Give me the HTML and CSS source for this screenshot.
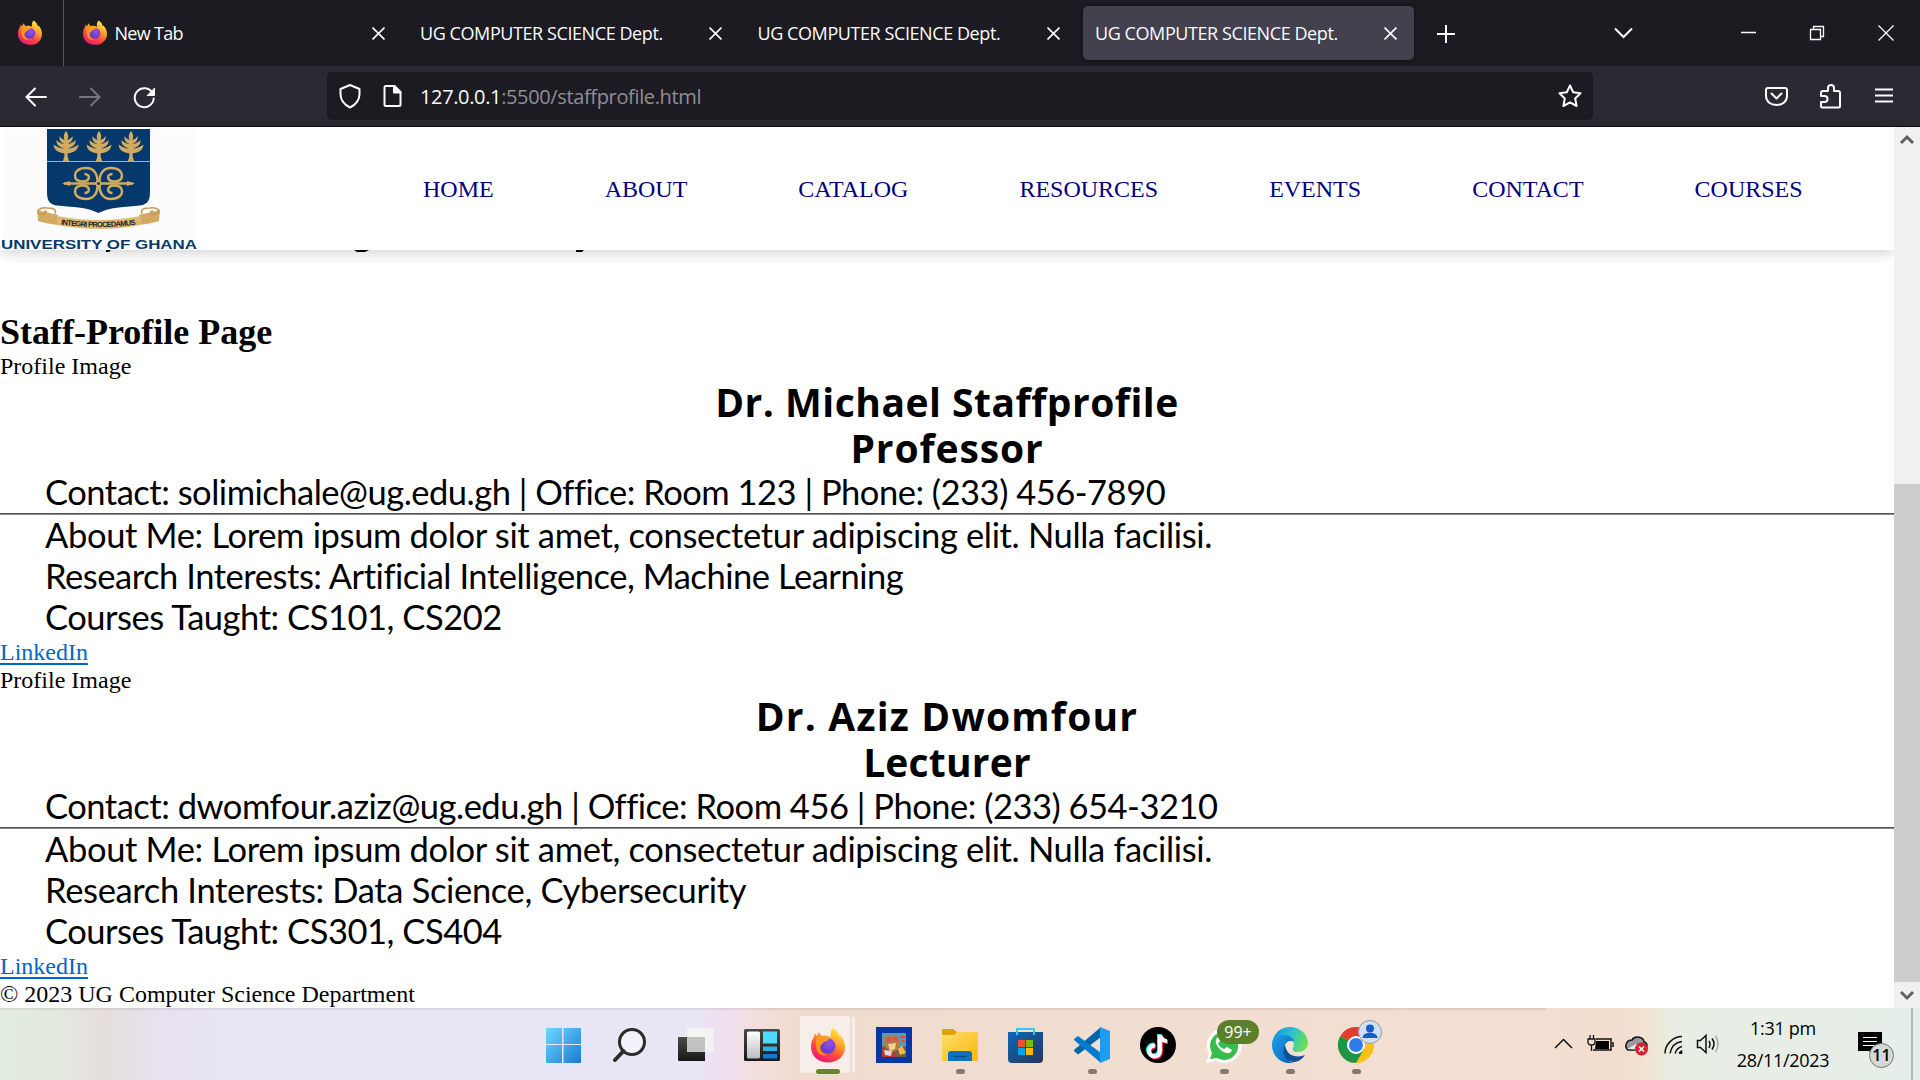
FILE: index.html
```html
<!DOCTYPE html>
<html lang="en">
<head>
<meta charset="utf-8">
<title>UG COMPUTER SCIENCE Dept.</title>
<link rel="stylesheet" href="styles.css">
</head>
<body>
<svg class="defs" aria-hidden="true">
  <defs>
    <linearGradient id="fxBody" x1=".8" y1="0" x2=".25" y2="1"><stop offset="0" stop-color="#fff04a"/><stop offset=".35" stop-color="#ffa726"/><stop offset=".65" stop-color="#ff4a3d"/><stop offset="1" stop-color="#e8127c"/></linearGradient>
    <radialGradient id="fxGlobe" cx=".6" cy=".3" r=".8"><stop offset="0" stop-color="#a04bf0"/><stop offset="1" stop-color="#4a3fc0"/></radialGradient>
    <linearGradient id="win" x1="0" y1="0" x2="1" y2="1"><stop offset="0" stop-color="#6fd8ff"/><stop offset="1" stop-color="#1a7bd4"/></linearGradient>
    <linearGradient id="dark" x1="0" y1="0" x2="0" y2="1"><stop offset="0" stop-color="#4a4a48"/><stop offset="1" stop-color="#181818"/></linearGradient>
    <linearGradient id="pane" x1="0" y1="0" x2="0" y2="1"><stop offset="0" stop-color="#fff"/><stop offset="1" stop-color="#b9bdc2"/></linearGradient>
    <linearGradient id="fold" x1="0" y1="0" x2="1" y2="1"><stop offset="0" stop-color="#ffdc6b"/><stop offset="1" stop-color="#fbb80f"/></linearGradient>
    <linearGradient id="store" x1="0" y1="0" x2="1" y2="1"><stop offset="0" stop-color="#0d68b8"/><stop offset="1" stop-color="#26355d"/></linearGradient>
    <linearGradient id="edgeTop" x1="0" y1=".3" x2="1" y2=".6"><stop offset="0" stop-color="#1593d8"/><stop offset=".5" stop-color="#2fc2cf"/><stop offset="1" stop-color="#6ee24a"/></linearGradient>
    <linearGradient id="edgeLow" x1="0" y1="0" x2="1" y2="1"><stop offset="0" stop-color="#1da1e6"/><stop offset="1" stop-color="#0863be"/></linearGradient>
    <symbol id="firefox" viewBox="0 0 34 36">
      <path fill="url(#fxBody)" d="M22 1c3 2 5 4 6 8l1-1c3 3 5 7 5 12 0 9-7 15.500-17 15.500S0 29 0 19.500C0 15 1.500 12 3 10l.5-3.500L6 9l1.500-4L11 9c3-1 7 0 9 1-1-4 0-7 2-9z"/>
      <circle cx="17" cy="19" r="7.500" fill="url(#fxGlobe)"/>
      <path fill="#ff9a1f" d="M5 11c3-2 6-2 8 0l5 1c-1 2-3 2-5 3-2 1-2 3-4 4-1 5 3 9 8 9-7 2-12-3-12-9z"/>
    </symbol>
    <symbol id="x" viewBox="0 0 12 12"><path d="M.5.5l11 11M11.500.5l-11 11" fill="none" stroke="currentColor" stroke-width="1.500"/></symbol>
    <symbol id="tree" viewBox="0 0 26 31"><path fill="#d3aa62" d="M13 0c2 3 3 5 1.500 9 2-1 4-2 5-4 .5 4-1 6-5 8 4-.5 6-2 8-4 .5 5-3 7-8 8.500 5 0 8-2 11-4-.5 6-5 8-11 9 0 3 .5 5 2 8.500h-7c1.500-3.500 2-5.500 2-8.500-6-1-10.500-3-11-9 3 2 6 4 11 4-5-1.500-8.500-3.500-8-8.500 2 2 4 3.500 8 4-4-2-5.500-4-5-8 1 2 3 3 5 4C10 5 11 3 13 0z"/></symbol>
  </defs>
</svg>

<header class="tabs">
  <div class="pinned"><svg class="fx"><use href="#firefox"/></svg></div>
  <div class="tab"><svg class="fx"><use href="#firefox"/></svg><span class="tab-title newtab">New Tab</span><svg class="tab-x"><use href="#x"/></svg></div>
  <div class="tab"><span class="tab-title">UG COMPUTER SCIENCE Dept.</span><svg class="tab-x"><use href="#x"/></svg></div>
  <div class="tab"><span class="tab-title">UG COMPUTER SCIENCE Dept.</span><svg class="tab-x"><use href="#x"/></svg></div>
  <div class="tab active"><span class="tab-title">UG COMPUTER SCIENCE Dept.</span><svg class="tab-x"><use href="#x"/></svg></div>
  <svg class="window-icons" width="506" height="66" fill="none" stroke="#fbfbfe">
    <path d="M32 25v18M23 34h18" stroke-width="2"/>
    <path d="M201 28.500l8.500 8.500 8.500-8.500" stroke-width="2"/>
    <path d="M327 32.500h15M396.500 29.500h10v10h-10zM399.500 29v-2.500h10v10H407" stroke-width="1.300"/>
    <path d="M464.500 25.500l15 15M479.500 25.500l-15 15" stroke-width="1.300"/>
  </svg>
</header>

<div class="toolbar">
  <svg class="nav-icons" width="327" height="60" fill="none" stroke="#fbfbfe" stroke-width="2" stroke-linecap="round">
    <path d="M46 31H27M35 22.500L26.500 31l8.500 8.500"/>
    <path d="M80 31h19M91 22.500l8.500 8.500-8.500 8.500" stroke="#76757e"/>
    <path d="M152.500 27a9.500 9.500 0 1 0 1.200 5.500"/><path d="M154.500 22.500v7h-7z" fill="#fbfbfe" stroke-width="1"/>
  </svg>
  <div class="url">
    <svg class="url-icons" width="93" height="48" fill="none" stroke="#fbfbfe" stroke-width="2" stroke-linejoin="round">
      <path d="M23 13l9.500 4v5c0 6-3.500 10.500-9.500 13.500C17 32.500 13.500 28 13.500 22v-5z"/>
      <path d="M59 14h8.500l6 6v12.500a1.500 1.500 0 0 1-1.500 1.500H59a1.500 1.500 0 0 1-1.500-1.500v-17A1.500 1.500 0 0 1 59 14z"/><path d="M67 14v6.500h6.500z" fill="#fbfbfe"/>
    </svg>
    <span class="url-text"><b>127.0.0.1</b>:5500/staffprofile.html</span>
    <svg class="star" width="26" height="26" viewBox="0 0 26 26" fill="none" stroke="#fbfbfe" stroke-width="2" stroke-linejoin="round"><path d="M13 2.500l3.200 6.800 7.300 1-5.300 5.200 1.400 7.500-6.600-3.600L6.400 23l1.400-7.500-5.300-5.200 7.300-1z"/></svg>
  </div>
  <svg class="ext-icons" width="327" height="60" fill="none" stroke="#fbfbfe" stroke-width="2" stroke-linejoin="round">
    <path d="M175 22h17a2 2 0 0 1 2 2v6c0 6-5 9-10.500 9S173 36 173 30v-6a2 2 0 0 1 2-2z"/><path d="M178.500 27.500l5 5 5-5" stroke-linecap="round"/>
    <path d="M230 25h5v-3a3 3 0 0 1 6 0v3h4a2 2 0 0 1 2 2v13a1.500 1.500 0 0 1-1.500 1.500h-16A1.500 1.500 0 0 1 228 40v-4h3.500a3 3 0 0 0 0-6H228v-3a2 2 0 0 1 2-2z"/>
    <path d="M282 23.500h18M282 29.500h18M282 35.500h18"/>
  </svg>
</div>

<div class="viewport">
  <main class="page">
    <nav class="site-nav">
      <svg class="logo" width="200" height="123" viewBox="0 0 200 123">
        <path d="M2 2h195v120H2z" fill="#fcfcfc"/>
        <path d="M47 2h103v63c0 16-9 13-27 15-12 1-18 3-24.500 6-6.500-3-12.500-5-24.500-6-18-2-27 1-27-15z" fill="#06396b"/>
        <path d="M47 34.500h103" stroke="#d3aa62"/>
        <use href="#tree" x="53" y="4" width="26" height="31"/><use href="#tree" x="86" y="4" width="26" height="31"/><use href="#tree" x="118" y="4" width="26" height="31"/>
        <g fill="none" stroke="#d3aa62" stroke-width="2.500">
          <path d="M64 56.500h69"/>
          <path id="swirl" d="M97.500 56C98 46 93 41 86 41c-8 0-11 4-11 7.500 0 4.500 4 6 8 6 7 0 8-7.500 1.500-7.500"/>
          <use href="#swirl" transform="matrix(-1 0 0 1 197 0)"/><use href="#swirl" transform="matrix(1 0 0 -1 0 113)"/><use href="#swirl" transform="matrix(-1 0 0 -1 197 113)"/>
        </g>
        <path d="M62 56.500l8-2.500v5zM135 56.500l-8-2.500v5zM98.500 52l4 4.500-4 4.500-4-4.500z" fill="#d3aa62"/><circle cx="98.500" cy="56.500" r="1.500" fill="#06396b"/>
        <path d="M37 83l21 5v10c-7-1-14-2-20-4zM160 83l-21 5v10c7-1 14-2 20-4z" fill="#d3aa62"/>
        <path d="M57 89q41.500 8 84 0v9q-42 8-84 0z" fill="#dfb973"/>
        <path d="M55 87c2-5-2-6-8-6-8-1-12 4-7 6 5 1 9-3 4-3M142 87c-2-5 2-6 8-6 8-1 12 4 7 6-5 1-9-3-4-3" fill="none" stroke="#c59c55" stroke-width="1.500"/>
        <path id="motto" d="M61 97.500q37.500 5 76 0" fill="none"/>
        <text class="motto"><textPath href="#motto" textLength="75">INTEGRI PROCEDAMUS</textPath></text>
        <text class="uni" x="1" y="122" textLength="196" lengthAdjust="spacingAndGlyphs">UNIVERSITY OF GHANA</text>
      </svg>
      <ul class="links"><li>HOME</li><li>ABOUT</li><li>CATALOG</li><li>RESOURCES</li><li>EVENTS</li><li>CONTACT</li><li>COURSES</li></ul>
    </nav>
    <svg class="peek" width="700" height="3"><path d="M106 0h5l-2 2h-3zM354 0h15l-4 2h-8zM576 0h8l-2 2h-6z" fill="#000"/></svg>
    <h1>Staff-Profile Page</h1>
    <section class="card">
      <p class="plain">Profile Image</p>
      <h2>Dr. Michael Staffprofile</h2>
      <h2 class="wide">Professor</h2>
      <p class="info contact">Contact: solimichale@ug.edu.gh | Office: Room 123 | Phone: (233) 456-7890</p>
      <hr>
      <p class="info about">About Me: Lorem ipsum dolor sit amet, consectetur adipiscing elit. Nulla facilisi.</p>
      <p class="info">Research Interests: Artificial Intelligence, Machine Learning</p>
      <p class="info">Courses Taught: CS101, CS202</p>
      <p class="plain"><a href="#">LinkedIn</a></p>
    </section>
    <section class="card">
      <p class="plain">Profile Image</p>
      <h2 class="wider">Dr. Aziz Dwomfour</h2>
      <h2 class="snug">Lecturer</h2>
      <p class="info contact">Contact: dwomfour.aziz@ug.edu.gh | Office: Room 456 | Phone: (233) 654-3210</p>
      <hr>
      <p class="info about">About Me: Lorem ipsum dolor sit amet, consectetur adipiscing elit. Nulla facilisi.</p>
      <p class="info about">Research Interests: Data Science, Cybersecurity</p>
      <p class="info">Courses Taught: CS301, CS404</p>
      <p class="plain"><a href="#">LinkedIn</a></p>
    </section>
    <footer class="plain">© 2023 UG Computer Science Department</footer>
  </main>
  <aside class="scroll">
    <svg width="26" height="26"><path d="M7 16l6-6 6 6" fill="none" stroke="#606060" stroke-width="3"/></svg>
    <div class="thumb"></div>
    <svg width="26" height="26"><path d="M7 10l6 6 6-6" fill="none" stroke="#606060" stroke-width="3"/></svg>
  </aside>
</div>

<footer class="taskbar">
  <div class="apps">
    <div class="app"><svg width="36" height="36"><path fill="url(#win)" d="M1 1h15v16H0V2a1 1 0 0 1 1-1zM17.500 1H34a1 1 0 0 1 1 1v15H17.500zM0 18h16v18H1a1 1 0 0 1-1-1zM17.500 18H35v17a1 1 0 0 1-1 1H17.500z"/></svg></div>
    <div class="app"><svg width="36" height="36" fill="none" stroke="#2b2b2b" stroke-width="3"><circle cx="20" cy="15" r="12.500" fill="#f3f2f8"/><path d="M11.500 24L3 33" stroke-width="4" stroke-linecap="round"/></svg></div>
    <div class="app"><svg width="36" height="36"><path d="M0 10h27v24H1a1 1 0 0 1-1-1z" fill="url(#dark)"/><path d="M9 1h27v24H9z" fill="#f4f4f2" fill-opacity=".9"/><path d="M9 10h18v15H9z" fill="#c2c2c2"/></svg></div>
    <div class="app"><svg width="36" height="36"><rect y="2" width="36" height="32" rx="1.500" fill="url(#dark)"/><rect x="3" y="4.500" width="13" height="27" rx="1.500" fill="url(#pane)"/><path d="M19 4.500h14v12H19z" fill="#50d9ff"/><path d="M19 19.500h14v4.500H19z" fill="#2cb0ea"/><path d="M19 27h14v4.500H19z" fill="#0c7cd9"/></svg></div>
    <div class="app current"><svg class="fx-big"><use href="#firefox"/></svg><i></i></div>
    <div class="app"><svg width="36" height="36"><path d="M0 0h36v36H0z" fill="#0636a4"/><path d="M6 6h24v24H6z" fill="#5b98b4"/><path d="M6 20l8-4 8 5 8-2v11H6z" fill="#7e5b38"/><path d="M8 12l3-4 9 1 4 4-1 9-8 4-6-6z" fill="#b77a43"/><path d="M10 11l4-1 1 4-4 1zM18 10l4 1-1 3-4-1z" fill="#ef4550"/><path d="M12 17l8-1-1 6-5 2z" fill="#f0d48d"/><path d="M6 23l5-1 9 6v2H6z" fill="#c6352f"/><path d="M8 23l8 1-1 5-6-1z" fill="#ddd"/><path d="M22 22l4-3 4 7-6 2z" fill="#eebb48"/><path d="M24 9h5v2h-5zM26 13h3v2h-3z" fill="#ef4343"/></svg></div>
    <div class="app run"><svg width="36" height="36"><path d="M0 3a1 1 0 0 1 1-1h10l4 3h20v10H0z" fill="#dda10c"/><path d="M0 8h12l3-3h21v28a1 1 0 0 1-1 1H1a1 1 0 0 1-1-1z" fill="url(#fold)"/><path d="M6 34v-7a3 3 0 0 1 3-3h18a3 3 0 0 1 3 3v7z" fill="#0c72c4"/><path d="M11 29.500h14" stroke="#064c8b" stroke-width="1.500"/></svg><i></i></div>
    <div class="app"><svg width="36" height="36"><path d="M0 5h35v27a4 4 0 0 1-4 4H4a4 4 0 0 1-4-4z" fill="url(#store)"/><path d="M9 8V2h17v6" fill="none" stroke="#35c6f4" stroke-width="2"/><path d="M10 13h7v7h-7z" fill="#f25022"/><path d="M18 13h7v7h-7z" fill="#7fba00"/><path d="M10 21h7v7h-7z" fill="#00a4ef"/><path d="M18 21h7v7h-7z" fill="#ffb900"/></svg></div>
    <div class="app run"><svg width="36" height="36"><path d="M27 0v10L4 27.500 0 24v-1z" fill="#0065a9"/><path d="M0 12l4-3 23 17v10L0 13z" fill="#007acc"/><path d="M26 0l10 4v28l-10 4z" fill="#1f9cf0"/></svg><i></i></div>
    <div class="app"><svg width="36" height="36"><circle cx="18" cy="18" r="18"/><g fill="none" stroke-width="4"><path d="M19 7v16a5.500 5.500 0 1 1-5-5.500M19 8c1 4 3 6 7 6" stroke="#25f4ee"/><path d="M21 9v16a5.500 5.500 0 1 1-5-5.500M21 9c1 4 3 6 7 6" stroke="#fe2c55"/><path d="M20 8v16a5.500 5.500 0 1 1-5-5.500M20 8c1 4 3 6 7 6" stroke="#fff"/></g></svg></div>
    <div class="app run"><svg width="36" height="36"><path d="M0 36l3-9A17.500 17.500 0 1 1 10 34z" fill="#fff"/><path d="M4 32l2-6A14 14 0 1 1 11 31z" fill="#36bd4a"/><path d="M12 10c-5 4-1 10 4 14 4 3 9 3 10-1l-5-3-3 2c-3-1-5-3-6-6l2-2z" fill="#fff"/></svg><b class="count">99+</b><i></i></div>
    <div class="app run"><svg width="36" height="36"><path d="M0 17C1 7 8 0 18 0s18 7 18 16c0 6-5 9-11 9-5 0-6-2-4-5 2-6-5-10-12-9-5 1-8 3-9 6z" fill="url(#edgeTop)"/><path d="M0 18c0-7 6-10 11-10 7 0 11 4 11 6-7-1-11 4-10 10 1 7 6 11 10 12C9 38 0 29 0 18z" fill="url(#edgeLow)"/><path d="M13 17c-4 9 0 18 10 18 5-1 8-4 10-7-7 3-19 2-20-11z" fill="#114f98"/><path d="M18 14c5 0 4 4 3 7-1 2 0 4 4 4 4 .5 7-.5 9-1-3 4-19 4-20-5 0-3 2-5 4-5z" fill="#f4e2d8"/></svg><i></i></div>
    <div class="app run"><svg width="36" height="36"><circle cx="18" cy="18" r="18" fill="#fbc116"/><path d="M18 18L2.400 9a18 18 0 0 1 31.200 0z" fill="#e33b2e"/><path d="M18 18L2.400 9A18 18 0 0 0 18 36l8-14z" fill="#229445"/><circle cx="18" cy="18" r="9" fill="#fff"/><circle cx="18" cy="18" r="7" fill="#2f7cec"/></svg><svg class="user" width="24" height="24"><circle cx="12" cy="12" r="11.500" fill="#cfdff8" stroke="#999" stroke-width="1"/><circle cx="12" cy="8.500" r="4" fill="#1a5cc8"/><path d="M4.500 18c0-7 15-7 15 0z" fill="#1a5cc8"/></svg><i></i></div>
  </div>
  <svg class="tray" width="180" height="72" fill="none" stroke="#111" stroke-width="1.500">
    <path d="M10 40l8.500-8.500L27 40"/>
    <path d="M51 31h15v11H48M68 34v5"/><path d="M51 33h13v8H50z" fill="#000" stroke="none"/><path d="M43 31h7v3c0 4-7 4-7 0zM45 31v-4M48.500 31v-4M46.500 37v6" stroke-width="1.300"/>
    <path d="M83 42h16c4-2 4-7 0-8 0-5-9-7-12-2-6 0-8 7-4 10z" fill="#999"/><path d="M82 41l9-5 8 6z" fill="#e6e6e6" stroke="none"/><circle cx="96.500" cy="41" r="6.500" fill="#d9202e" stroke="none"/><path d="M94 38.500l5 5M99 38.500l-5 5" stroke="#fff"/>
    <path d="M120 45.500c0-9 8-17 17-17M125 45.500c1-6 5-11 12-12M130 45.500c1-3 3-6 7-7M134 45.500l3-3"/><circle cx="136" cy="44.500" r="1.500" fill="#000" stroke="none"/>
    <path d="M152.500 32.500h3l5.500-5v17l-5.500-5h-3zM164 33q2 3 0 7M167 30.500q4 5 0 11"/><path d="M170.500 28q5 8 0 16" stroke="#aaa"/>
  </svg>
  <div class="clock"><span>1:31 pm</span><span>28/11/2023</span></div>
  <div class="notify"><svg width="26" height="26"><path d="M0 0h24v19h-7v6l-6-6H0z"/><path d="M5 5.500h14M5 9.500h14M5 13.500h14" stroke="#fff" stroke-width="1.200"/></svg><b>11</b></div>
</footer>
</body>
</html>
```
FILE: styles.css
```css
* { box-sizing: border-box; margin: 0; padding: 0; }
body { width: 1920px; height: 1080px; overflow: hidden; display: flex; flex-direction: column; background: #fff; font-family: "Liberation Serif", "Times New Roman", serif; font-size: 24px; color: #000; }
svg { display: block; flex: none; }
.defs { position: absolute; width: 0; height: 0; }

/* Browser tab strip */
.tabs { height: 66px; flex: none; display: flex; align-items: center; background: #1c1b22; color: #fbfbfe; font: 18px "Open Sans", sans-serif; letter-spacing: -.42px; }
.pinned { width: 64px; height: 66px; padding: 0 0 0 18px; display: flex; align-items: center; border-right: 1px solid #55545c; }
.fx { width: 24px; height: 29px; margin-top: -2px; }
.tab { width: 331px; height: 54px; margin-left: 6.500px; padding: 0 17px 0 12px; display: flex; align-items: center; border-radius: 5px; white-space: nowrap; }
.tab.active { background: #42414d; box-shadow: 0 0 4px rgba(0, 0, 0, .5); }
.newtab { margin-left: 8px; letter-spacing: -.7px; }
.tab-x { width: 13px; height: 13px; margin-left: auto; }

/* Address bar */
.toolbar { height: 61px; flex: none; display: flex; align-items: flex-start; background: #2b2a33; border-bottom: 1px solid #0c0c0d; }
.url { width: 1266px; height: 48px; margin-top: 6px; padding-right: 10px; display: flex; align-items: center; background: #1c1b22; border-radius: 5px; font: 20px "Open Sans", sans-serif; letter-spacing: -.36px; color: #8f8f96; }
.url b { font-weight: 400; color: #fbfbfe; }
.star { margin-left: auto; }

/* Web page */
.viewport { height: 881px; flex: none; display: flex; }
.page { width: 1894px; display: flex; flex-direction: column; }
.site-nav { height: 123px; flex: none; display: flex; align-items: center; box-shadow: 0 2px 14px rgba(0, 0, 0, .2); }
.links { display: flex; gap: 111px; margin-left: 223px; padding-top: 2px; list-style: none; color: #000080; }
.motto { font: bold 7.500px "Liberation Sans", sans-serif; fill: #222; }
.uni { font: bold 13px "Liberation Sans", sans-serif; fill: #06396b; }
.peek { height: 3px; }
h1 { height: 40px; margin-top: 59px; font-size: 36px; line-height: 40px; }
.plain { height: 28px; line-height: 28px; }
.plain a { color: #0066cc; text-underline-offset: 3px; }
h2 { height: 46px; text-align: center; font: bold 39px/44px "Open Sans", sans-serif; letter-spacing: .5px; }
.wide { letter-spacing: .9px; }
.wider { letter-spacing: 1.200px; }
.snug { letter-spacing: .2px; }
.info { height: 41px; padding-left: 45px; font: 34.500px/40px Lato, sans-serif; letter-spacing: -.46px; white-space: nowrap; }
.contact { letter-spacing: -.49px; }
.about { letter-spacing: -.34px; }
hr { height: 2px; border: 0; border-top: 1px solid #555; border-bottom: 1px solid #888; }

.scroll { width: 26px; display: flex; flex-direction: column; background: #f0f0f0; }
.thumb { height: 498px; margin-top: auto; background: #cdcdcd; }

/* Desktop taskbar */
.taskbar { height: 72px; flex: none; display: flex; padding-left: 531px; background: linear-gradient(rgba(80, 50, 60, .1), rgba(80, 50, 60, .1)) 0 0 / 1546px 2px no-repeat, linear-gradient(90deg, #e3ece1 0, #e3e8df 60px, #e5dfdc 105px, #e8e0ef 155px, #e8e6f4 230px, #e8e6f4 690px, #eedff1 725px, #f2dfdc 755px, #f0dccf 800px, #f3dfd2 1400px, #f3ddcf 1620px, #f2e3d1 1645px, #e8eee4 1675px, #e6eee9 1920px); }
.apps { display: flex; }
.app { width: 66px; height: 72px; padding: 19px 0 0 15px; position: relative; }
.app i { position: absolute; left: 29px; top: 61px; width: 9px; height: 5px; border-radius: 3px; background: #85786f; }
.current { background: linear-gradient(#f7eee9, #f7eee9) 5px 8px / 50px 57px no-repeat, linear-gradient(#f7eee9, #f7eee9) 57px 9px / 3px 55px no-repeat; }
.current i { left: 21px; width: 24px; background: #66852e; }
.fx-big { width: 34px; height: 36px; margin-left: 1px; }
.count { position: absolute; left: 26px; top: 12px; width: 42px; height: 24px; border-radius: 12px; background: #5c7f2b; color: #fff; text-align: center; font: 16px/24px "Open Sans", sans-serif; }
.user { position: absolute; left: 35px; top: 12px; }
.tray { margin-left: 156px; }
.clock { width: 120px; padding-top: 4px; display: flex; flex-direction: column; align-items: center; margin-left: -2px; margin-right: 2px; font: 18px/32px "Open Sans", sans-serif; letter-spacing: -.3px; }
.notify { position: relative; padding: 24px 0 0 14px; width: 69px; border-right: 2px solid #b5bbb7; margin-left: -1px; }
.notify b { position: absolute; left: 25px; top: 35px; width: 25px; height: 25px; border-radius: 50%; border: 1px solid #777; background: #d4d8d6; font: 600 16px/23px "Open Sans", sans-serif; text-align: center; }
```
